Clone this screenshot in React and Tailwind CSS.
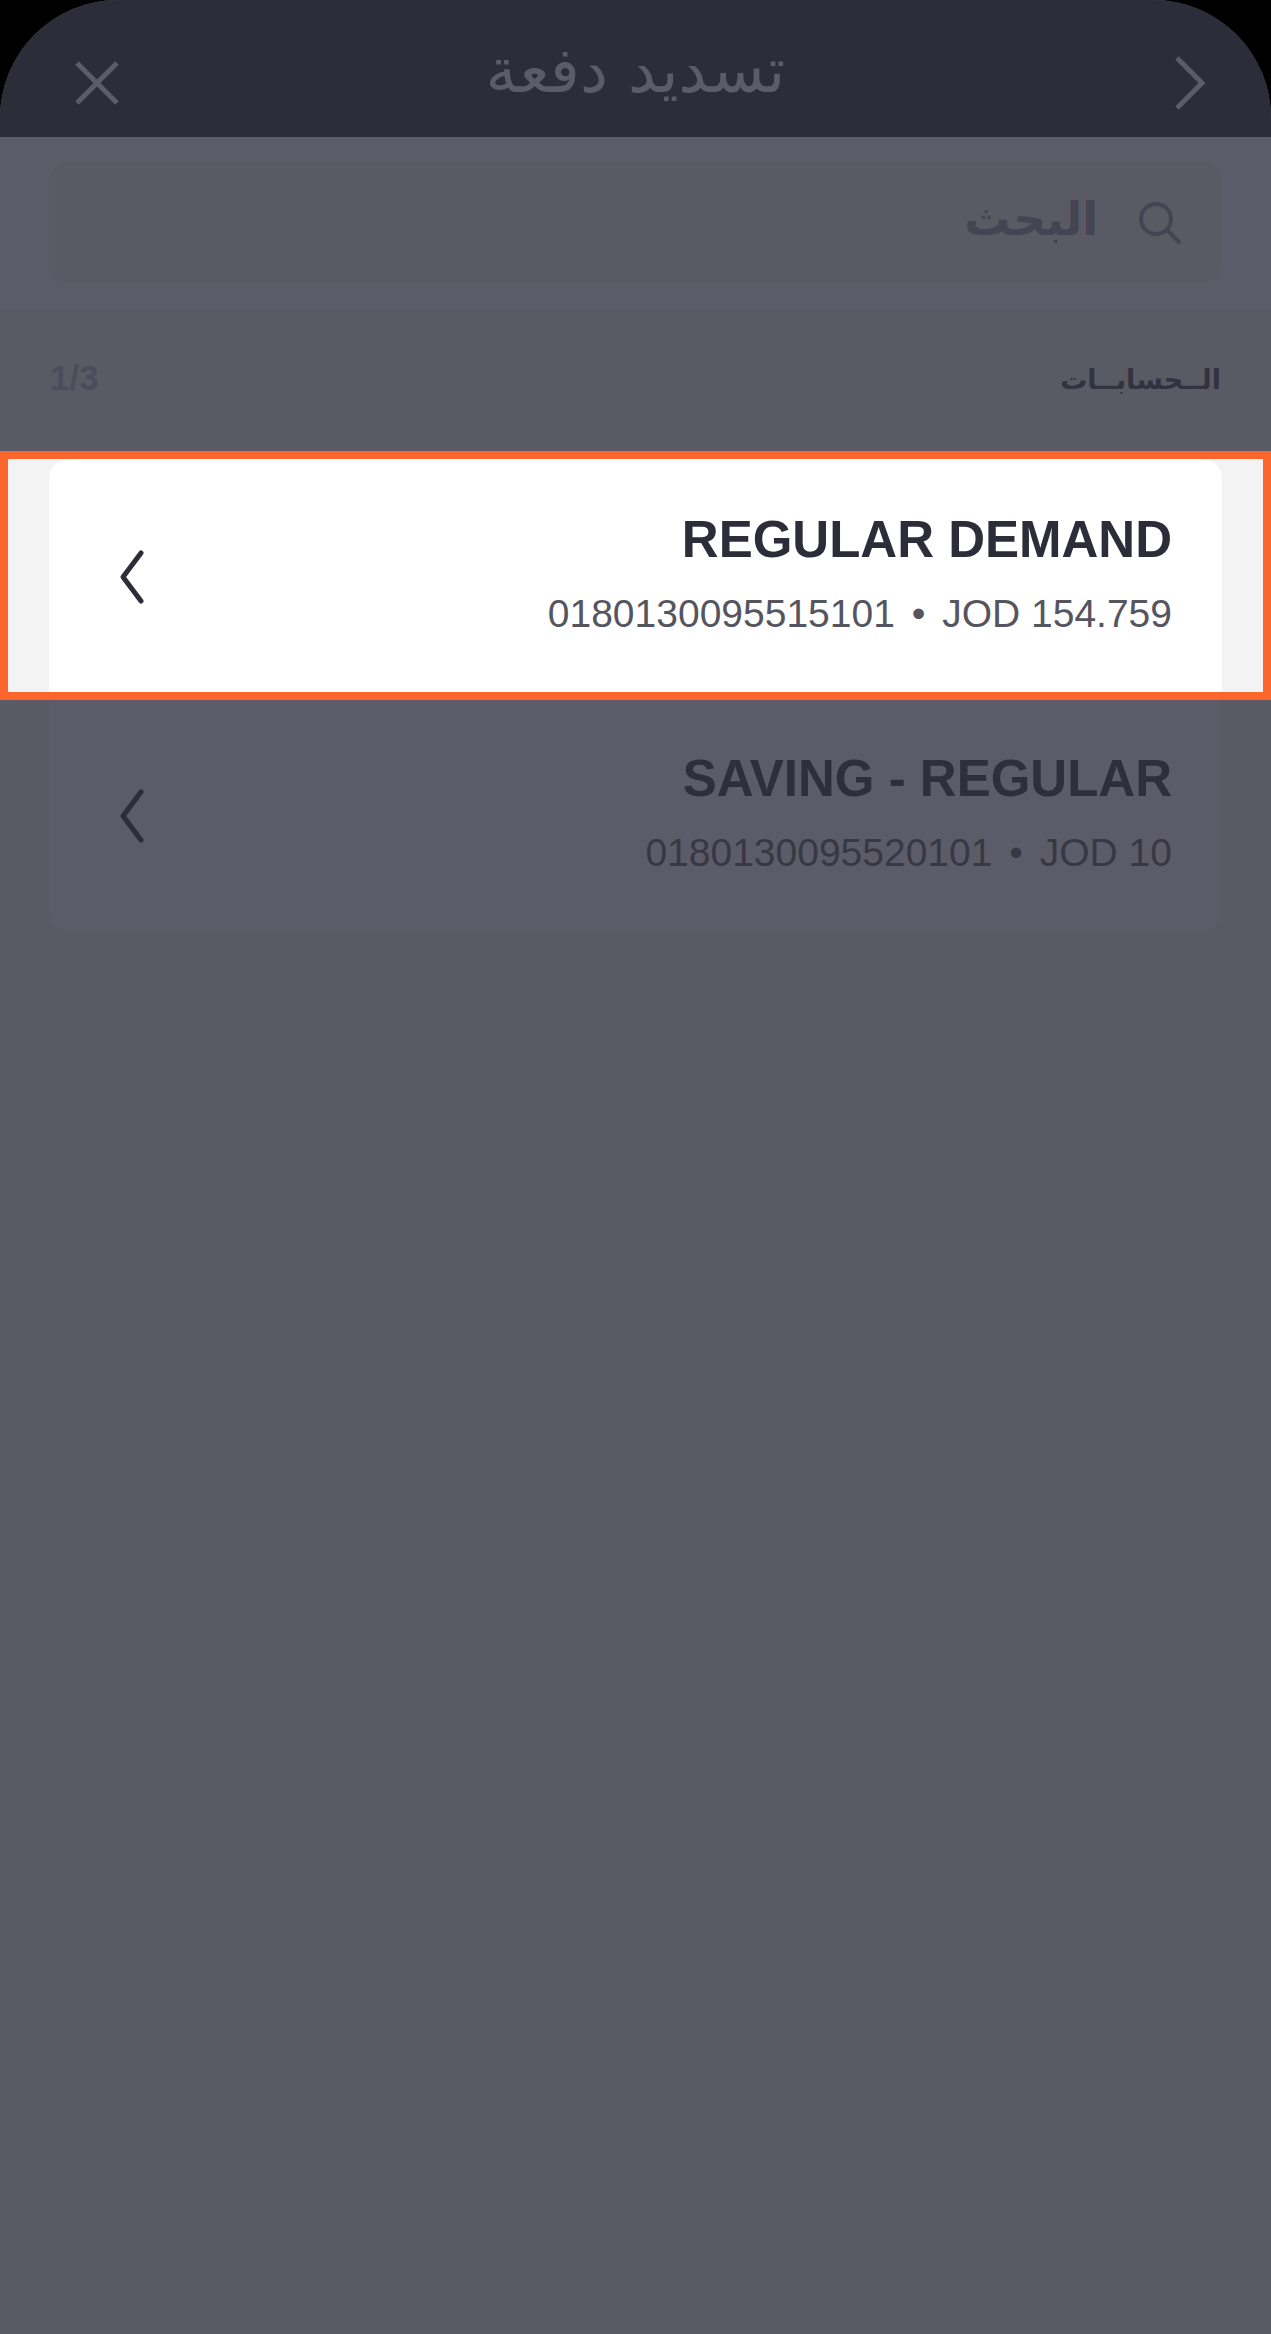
import React, { useState } from 'react';

const accounts = [
    { name: 'REGULAR DEMAND', number: '0180130095515101', balance: 'JOD 154.759' },
    { name: 'SAVING - REGULAR', number: '0180130095520101', balance: 'JOD 10' },
];

const AccountRow = ({ account, titleColor, detailColor }) => (
    <button type="button" className="flex h-full w-full items-center justify-between pr-[50px] pl-[70px]">
        <span dir="ltr" className="flex flex-col text-right">
            <span className={`text-[51px] leading-[74px] font-bold ${titleColor}`}>{account.name}</span>
            <span className={`text-[39px] leading-[74px] ${detailColor}`}>
                {account.number} <span className="mx-1.5">•</span> {account.balance}
            </span>
        </span>
        <svg width="26" height="56" viewBox="0 0 26 56" fill="none" stroke="#2d2d3a" strokeWidth="5" strokeLinecap="round" strokeLinejoin="round" aria-hidden="true">
            <path d="M22 4 L4 28 L22 52" />
        </svg>
    </button>
);

const App = () => {
    const [query, setQuery] = useState('');

    return (
        <div className="min-h-screen bg-black">
            <div dir="rtl" className="min-h-screen overflow-hidden rounded-t-[118px] bg-[#5a5a64] font-['Liberation_Sans','DejaVu_Sans',sans-serif]">
                {/* Header */}
                <header className="flex h-[137px] items-center justify-between bg-[#2d2d3a] px-[64px] pt-7">
                    <button type="button" aria-label="رجوع">
                        <svg width="64" height="56" viewBox="0 0 64 56" fill="none" stroke="#5c5c68" strokeWidth="5" aria-hidden="true">
                            <path d="M34 3 L59 28 L34 53" />
                        </svg>
                    </button>
                    <h1 className="pb-6 font-['DejaVu_Sans',sans-serif] text-[63px] leading-[64px] text-[#5c5c68]">تسديد دفعة</h1>
                    <button type="button" aria-label="إغلاق">
                        <svg width="64" height="56" viewBox="0 0 64 56" fill="none" stroke="#5c5c68" strokeWidth="5" aria-hidden="true">
                            <path d="M13 8 L53 48 M53 8 L13 48" />
                        </svg>
                    </button>
                </header>

                {/* Search */}
                <div className="bg-[#5c5c68] px-[49px] pt-[25px] pb-[26px]">
                    <label className="flex h-[121px] items-center gap-10 rounded-[20px] bg-[#5a5a64] px-10">
                        <svg width="44" height="44" viewBox="0 0 44 44" fill="none" stroke="#454452" strokeWidth="4" strokeLinecap="round" aria-hidden="true">
                            <circle cx="18" cy="18" r="15" />
                            <path d="M29 29 L41 41" />
                        </svg>
                        <input
                            type="search"
                            aria-label="البحث"
                            value={query}
                            onChange={(e) => setQuery(e.target.value)}
                            placeholder="البحث"
                            className="h-full min-w-0 flex-1 bg-transparent pb-2 font-['DejaVu_Sans',sans-serif] text-[46px] font-bold text-[#454452] placeholder-[#454452] outline-none"
                        />
                    </label>
                </div>

                {/* Accounts */}
                <main>
                    <div className="flex h-[142px] items-center justify-between px-[50px] pb-1">
                        <h2 className="pt-1 font-['DejaVu_Sans',sans-serif] text-[27px] leading-[40px] font-bold text-[#323240]">الــحسابــات</h2>
                        <span dir="ltr" className="text-[35px] leading-[40px] font-bold text-[#4c4c5a]">1/3</span>
                    </div>

                    {/* Highlighted account */}
                    <div className="h-[249px] border-8 border-[#fc652b] bg-[#f3f3f3] px-[41px]">
                        <div className="h-full rounded-t-[20px] bg-white pt-[2px]">
                            <AccountRow account={accounts[0]} titleColor="text-[#2d2d3a]" detailColor="text-[#555560]" />
                        </div>
                    </div>

                    <div className="px-[49px]">
                        <div className="h-[231px] rounded-b-[20px] bg-[#5c5c68]">
                            <AccountRow account={accounts[1]} titleColor="text-[#2f2f3c]" detailColor="text-[#383845]" />
                        </div>
                    </div>
                </main>
            </div>
        </div>
    );
};

export default App;
